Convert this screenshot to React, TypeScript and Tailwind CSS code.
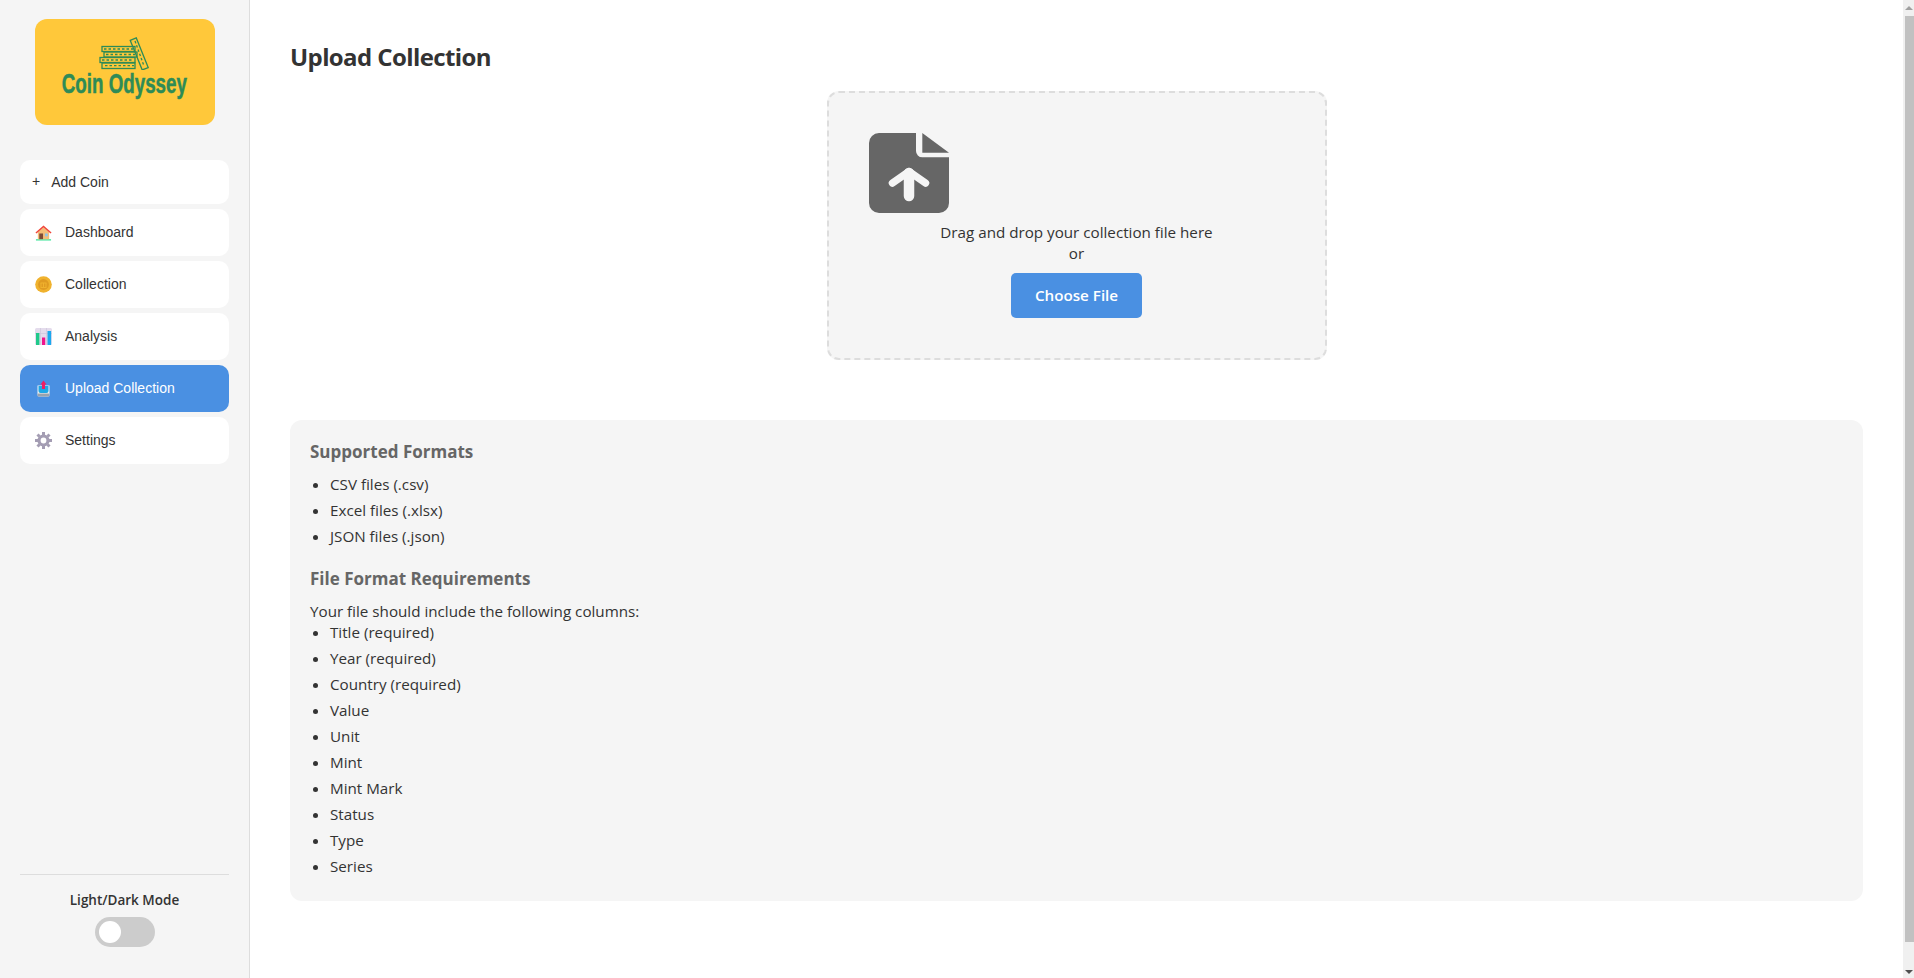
import { FC, ReactNode } from "react";

const HomeIcon = () => (
    <svg width="18" height="18" viewBox="0 0 18 18">
        <rect x="1" y="15.5" width="16" height="1.5" fill="#4be6a0" />
        <path d="M3 8 9 3l6 5v7.500H3z" fill="#f3bd78" />
        <path d="M1 9 9 2l8 7" fill="none" stroke="#f0453a" strokeWidth="1.6" />
        <rect x="4.500" y="9.500" width="4" height="6" fill="#7c4a35" />
        <rect x="10.500" y="9.500" width="3" height="3" fill="#8fc4e8" />
    </svg>
);

const CoinIcon = () => (
    <svg width="17" height="17" viewBox="0 0 17 17">
        <circle cx="8.500" cy="8.500" r="8.300" fill="#f0b22e" />
        <circle cx="8.500" cy="8.500" r="5.400" fill="#e09b22" />
        <path d="M5.500 7h6M6 7v4M8.500 7v4M11 7v4M5.500 11.500h6" stroke="#f0b22e" strokeWidth="1" />
    </svg>
);

const ChartIcon = () => (
    <svg width="17" height="17" viewBox="0 0 17 17">
        <rect width="17" height="17" rx="1.500" fill="#e4dcec" />
        <path d="M5.500 0v17M11.500 0v17M0 5.500h17" stroke="#cfc5dc" strokeWidth="0.7" />
        <rect x="1" y="5" width="3.400" height="12" fill="#1fc98a" />
        <rect x="7" y="9.500" width="3.200" height="7.500" fill="#f0148c" />
        <rect x="12.500" y="3" width="3.600" height="14" fill="#1aa9ee" />
    </svg>
);

const UploadIcon = () => (
    <svg width="17" height="17" viewBox="0 0 17 17">
        <path d="M2.500 5.500h12V15a1.500 1.500 0 0 1-1.500 1.500H4A1.500 1.500 0 0 1 2.500 15z" fill="#f4f4f4" />
        <rect x="2.500" y="13.500" width="12" height="3" rx="1" fill="#9aa3ae" />
        <path d="M3.500 6h10v5a2 2 0 0 1-2 2h-6a2 2 0 0 1-2-2z" fill="#1fa8e6" />
        <path d="M8.500 0.500 11.500 4.500H10V9H7V4.500H5.500z" fill="#f01e63" />
    </svg>
);

const GearIcon = () => (
    <svg width="17" height="17" viewBox="0 0 17 17">
        <circle cx="8.500" cy="8.500" r="4.500" fill="none" stroke="#a49db3" strokeWidth="3.200" />
        <path
            d="M8.500 0v3M8.500 14v3M0 8.500h3M14 8.500h3M2.500 2.500l2 2M12.500 12.500l2 2M14.500 2.500l-2 2M4.500 12.500l-2 2"
            stroke="#a49db3"
            strokeWidth="3"
        />
    </svg>
);

const FileUploadIcon = () => (
    <svg width="80" height="80" viewBox="0 0 80 80" className="block">
        <path d="M53.300 0 80 19.700H53.300z" fill="#666" />
        <path
            d="M10 0h37v18a6.300 6.300 0 0 0 6.300 6.300H80V70a10 10 0 0 1-10 10H10A10 10 0 0 1 0 70V10A10 10 0 0 1 10 0z"
            fill="#666"
        />
        <path d="M40 40v23" stroke="#f5f5f5" strokeWidth="10.500" strokeLinecap="round" />
        <path
            d="M23.500 50 40 38.500 56.500 50"
            fill="none"
            stroke="#f5f5f5"
            strokeWidth="7.500"
            strokeLinecap="round"
            strokeLinejoin="round"
        />
    </svg>
);

const CoinStack = () => (
    <svg width="52" height="33" viewBox="0 0 52 33" className="block">
        <g fill="none" stroke="#2e8b57" strokeWidth="1.300">
            <rect x="3" y="9.500" width="33" height="5" />
            <rect x="5" y="15" width="33" height="5" />
            <rect x="1" y="20.500" width="35" height="5" />
            <rect x="3" y="26" width="33" height="5.500" />
            <rect x="37" y="1" width="6.500" height="32" transform="rotate(-22 40 17)" />
        </g>
        <g stroke="#2e8b57" strokeWidth="1.300" strokeDasharray="2.500 2">
            <path d="M5 12h29M7 17.500h29M3 23h31M6 28.700h29" />
            <path d="M36 4 45 29" />
        </g>
    </svg>
);

const Logo = () => (
    <div className="mx-auto mb-[35px] flex h-[106px] w-[180px] flex-col items-center justify-center rounded-[12px] bg-[#ffc83a] pb-[11px]">
        <CoinStack />
        <span className="mt-[1px] scale-x-[0.67] whitespace-nowrap font-['Liberation_Sans',sans-serif] text-[28px] leading-[26px] font-bold text-[#2e8b57] [-webkit-text-stroke:0.5px_#2e8b57]">
            Coin Odyssey
        </span>
    </div>
);

interface NavItemProps {
    icon: ReactNode;
    label: string;
    active?: boolean;
}

const NavItem: FC<NavItemProps> = ({ icon, label, active }) => (
    <div
        className={
            active
                ? "flex h-[47px] items-center gap-[13px] rounded-[10px] bg-[#4a90e2] pl-[15px] text-white"
                : "flex h-[47px] items-center gap-[13px] rounded-[10px] bg-white pl-[15px] text-[#333]"
        }
    >
        <span className="flex w-[17px] justify-center">{icon}</span>
        <span>{label}</span>
    </div>
);

const Sidebar = () => (
    <aside className="flex h-full w-[250px] shrink-0 flex-col border-r border-[#ddd] bg-[#f5f5f5] px-[20px] pt-[19px] pb-[31px]">
        <Logo />
        <nav className="flex flex-col gap-[5px] font-['Liberation_Sans',sans-serif] text-[14px]">
            <div className="flex h-[44px] items-center rounded-[10px] bg-white pl-[12px] text-[#333]">
                <span className="mr-[11px] -translate-y-[1px]">+</span>
                <span>Add Coin</span>
            </div>
            <NavItem icon={<HomeIcon />} label="Dashboard" />
            <NavItem icon={<CoinIcon />} label="Collection" />
            <NavItem icon={<ChartIcon />} label="Analysis" />
            <NavItem icon={<UploadIcon />} label="Upload Collection" active />
            <NavItem icon={<GearIcon />} label="Settings" />
        </nav>
        <div className="mt-auto flex flex-col items-center border-t border-[#ddd] pt-[16px]">
            <span className="mb-[7px] text-[13.5px] leading-[19px] font-semibold text-[#333]">Light/Dark Mode</span>
            <div className="flex h-[30px] w-[60px] items-center rounded-full bg-[#ccc] pl-[4px]">
                <div className="size-[22px] rounded-full bg-white" />
            </div>
        </div>
    </aside>
);

const Bullets: FC<{ items: string[] }> = ({ items }) => (
    <ul className="list-disc pl-[20px]">
        {items.map((item) => (
            <li key={item} className="mb-[5px] leading-[21px]">
                {item}
            </li>
        ))}
    </ul>
);

const DropZone = () => (
    <div className="mx-auto h-[269px] w-[500px] rounded-[12px] border-2 border-dashed border-[#ddd] bg-[#f5f5f5] p-[40px] text-center">
        <FileUploadIcon />
        <p className="mt-[9px] leading-[21px]">Drag and drop your collection file here</p>
        <p className="leading-[21px]">or</p>
        <button className="mt-[9px] h-[45px] w-[131px] rounded-[5px] bg-[#4a90e2] font-semibold text-white">
            Choose File
        </button>
    </div>
);

const FormatInfo = () => (
    <div className="mt-[60px] rounded-[12px] bg-[#f5f5f5] px-[20px] pt-[20px] pb-[19px]">
        <h3 className="mb-[10px] text-[17px] leading-[24px] font-bold text-[#666]">Supported Formats</h3>
        <Bullets items={["CSV files (.csv)", "Excel files (.xlsx)", "JSON files (.json)"]} />
        <h3 className="mt-[20px] mb-[10px] text-[17px] leading-[24px] font-bold text-[#666]">
            File Format Requirements
        </h3>
        <p className="leading-[21px]">Your file should include the following columns:</p>
        <Bullets
            items={[
                "Title (required)",
                "Year (required)",
                "Country (required)",
                "Value",
                "Unit",
                "Mint",
                "Mint Mark",
                "Status",
                "Type",
                "Series",
            ]}
        />
    </div>
);

const Scrollbar = () => (
    <div className="flex h-full w-[11px] shrink-0 flex-col items-center bg-[#f0f0f0]">
        <div className="flex h-[16px] items-center">
            <div className="size-0 border-x-[4px] border-b-[4px] border-x-transparent border-b-[#a0a0a0]" />
        </div>
        <div className="ml-[2px] w-[9px] flex-1 bg-[#c1c1c1]" />
        <div className="flex h-[36px] items-center justify-center pt-[24px]">
            <div className="size-0 border-x-[4px] border-t-[4px] border-x-transparent border-t-[#505050]" />
        </div>
    </div>
);

export default function App() {
    return (
        <div className="flex h-screen overflow-hidden bg-white font-['Open_Sans',sans-serif] text-[15.2px] text-[#333]">
            <Sidebar />
            <main className="min-w-0 flex-1 px-[40px] pt-[40px]">
                <h2 className="mb-[17px] text-[24px] leading-[34px] font-bold tracking-[-0.6px]">Upload Collection</h2>
                <DropZone />
                <FormatInfo />
            </main>
            <Scrollbar />
        </div>
    );
}
